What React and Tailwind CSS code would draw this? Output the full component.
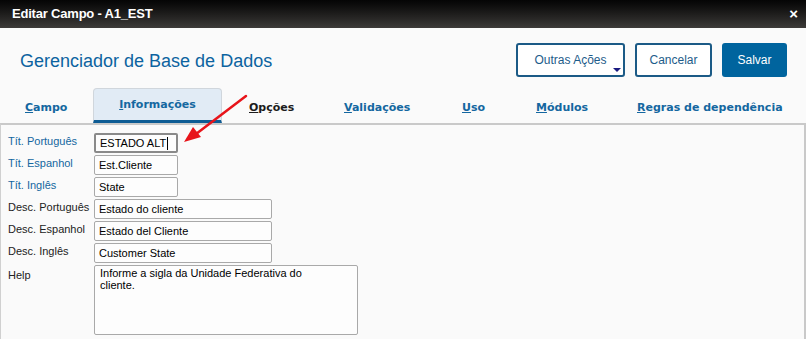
import React from 'react';

function Field({ label, value, blue, wide, focus }) {
  return (
    <div className="flex items-center h-[20px] mb-[2px]">
      <div className={`w-[93px] pl-[7px] text-[11px] -mt-[4px] ${blue ? 'text-[#1467a0]' : 'text-[#222]'}`}>{label}</div>
      <div
        className={`h-[20px] ${wide ? 'w-[178px]' : 'w-[84px]'} rounded-[2px] bg-[#fdfdfd] flex items-center px-[4px] text-[11px] text-black ${
          focus ? 'border-2 border-[#8a8a8a] px-[3px]' : 'border border-[#a9a9a9]'
        }`}
      >
        {value}
        {focus && <span className="w-px h-[13px] bg-black ml-px" />}
      </div>
    </div>
  );
}

export default function App() {
  return (
    <div className="w-[806px] h-[339px] overflow-hidden bg-[#fafafa] relative font-['Liberation_Sans',Arial,sans-serif]">
      {/* title bar */}
      <div className="h-[28px] bg-gradient-to-b from-[#050505] to-[#3d3b39] flex items-center justify-between px-[12px]">
        <span className="text-white font-bold text-[13px] tracking-[-0.2px]">Editar Campo - A1_EST</span>
        <span className="text-white font-bold text-[15px] mr-[-4px]">×</span>
      </div>

      {/* header */}
      <div className="flex items-start justify-between pl-[20px] pr-[19px] pt-[15px] h-[60px]">
        <h1 className="text-[18px] text-[#0c63a0] mt-[5px]">Gerenciador de Base de Dados</h1>
        <div className="flex gap-[10px]">
          <button className="relative w-[109px] h-[34px] border-2 border-[#1b5a86] rounded-[3px] bg-white text-[12px] text-[#1d5c8a]">
            Outras Ações
            <span className="absolute right-[2px] bottom-[3px] w-0 h-0 border-l-[4px] border-r-[4px] border-t-[4px] border-l-transparent border-r-transparent border-t-[#1a1a80]" />
          </button>
          <button className="w-[77px] h-[34px] border-2 border-[#1b5a86] rounded-[3px] bg-white text-[12px] text-[#1d5c8a]">Cancelar</button>
          <button className="w-[65px] h-[34px] rounded-[3px] bg-[#00649e] text-[12px] text-white">Salvar</button>
        </div>
      </div>

      {/* tabs */}
      <div className="flex items-end h-[35px] font-['DejaVu_Sans',Verdana,sans-serif] font-bold text-[11px]">
        <div className="w-[93px] pl-[25px] pb-[7px] text-[#1467a0]"><span className="underline">C</span>ampo</div>
        <div className="w-[129px] h-[35px] bg-[#e1ebf5] border border-b-0 border-[#d0d6dc] rounded-t-[4px] border-b-[3px] border-b-[#0e5c94] flex items-center justify-center pt-[2px] text-[#1467a0]">
          <span><span className="underline">I</span>nformações</span>
        </div>
        <div className="w-[122px] pl-[27px] pb-[7px] text-[#1c1c1c]"><span className="underline">O</span>pções</div>
        <div className="w-[118px] pb-[7px] text-[#1467a0]"><span className="underline">V</span>alidações</div>
        <div className="w-[74px] pb-[7px] text-[#1467a0]"><span className="underline">U</span>so</div>
        <div className="w-[101px] pb-[7px] text-[#1467a0]"><span className="underline">M</span>ódulos</div>
        <div className="pb-[7px] text-[#1467a0]"><span className="underline">R</span>egras de dependência</div>
      </div>

      {/* content panel */}
      <div className="border-t-2 border-[#c9c9c9] border-l border-r-2 border-l-[#d0d0d0] border-r-[#c9c9c9] h-[300px] pt-[8px]">
        <Field label="Tít. Português" value="ESTADO ALT" blue focus />
        <Field label="Tít. Espanhol" value="Est.Cliente" blue />
        <Field label="Tít. Inglês" value="State" blue />
        <Field label="Desc. Português" value="Estado do cliente" wide />
        <Field label="Desc. Espanhol" value="Estado del Cliente" wide />
        <Field label="Desc. Inglês" value="Customer State" wide />
        <div className="flex items-start">
          <div className="w-[93px] pl-[7px] text-[11px] text-[#222] pt-[2px]">Help</div>
          <div className="w-[264px] h-[70px] border border-[#a9a9a9] rounded-[2px] bg-[#fdfdfd] px-[5px] pt-px text-[11px] leading-[12px] text-black">
            Informe a sigla da Unidade Federativa do<br />cliente.
          </div>
        </div>
      </div>

      {/* red arrow annotation */}
      <svg className="absolute left-0 top-0 pointer-events-none" width="806" height="339">
        <line x1="246" y1="96" x2="196" y2="134" stroke="#e8141a" strokeWidth="2.5" strokeLinecap="round" />
        <polygon points="184,142 193,127 201,137" fill="#e8141a" />
      </svg>
    </div>
  );
}
